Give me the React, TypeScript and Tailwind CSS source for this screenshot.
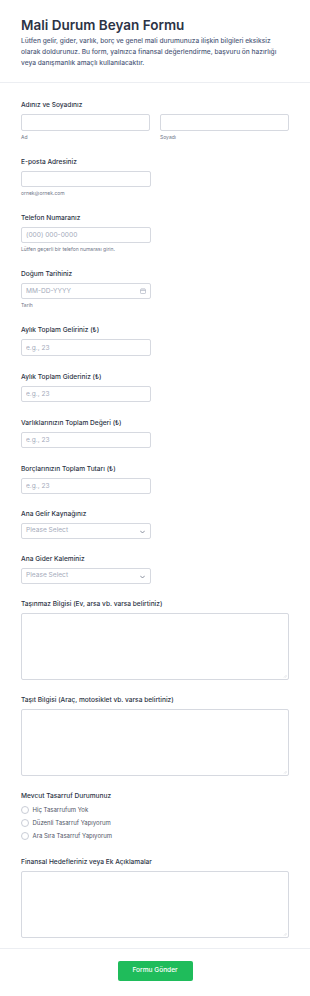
import React from "react";

const labelCls = "block text-[6.6px] leading-[10px] font-medium text-[#2c3345]";
const inputCls =
  "block h-[16px] w-full rounded-[2px] border border-[#d6d9e0] bg-white px-[4px] text-[6.6px] text-[#2c3345] placeholder:text-[#a5abbb] outline-none";
const subCls = "mt-[3px] block text-[5px] leading-[7px] text-[#6f7688]";

function Field({
  label,
  children,
  sub,
  mb = "mb-[16px]",
}: {
  label: string;
  children: React.ReactNode;
  sub?: string;
  mb?: string;
}) {
  return (
    <div className={mb}>
      <label className={labelCls}>{label}</label>
      <div className="mt-[4px]">{children}</div>
      {sub && <span className={subCls}>{sub}</span>}
    </div>
  );
}

function Chevron() {
  return (
    <svg width="5" height="4" viewBox="0 0 10 6" className="absolute right-[5px] top-[6px]">
      <path d="M1 1l4 4 4-4" fill="none" stroke="#6f7688" strokeWidth="1.6" strokeLinecap="round" strokeLinejoin="round" />
    </svg>
  );
}

function TextArea({ h = "h-[67px]" }: { h?: string }) {
  return (
    <div className="relative mt-[4px]">
      <textarea className={"block w-full resize-none rounded-[2px] border border-[#d6d9e0] outline-none " + h} />
      <svg width="4" height="4" viewBox="0 0 8 8" className="absolute bottom-[2px] right-[2px]">
        <path d="M7 2L2 7M7 5L5 7" stroke="#c4c8d0" strokeWidth="1" />
      </svg>
    </div>
  );
}

export default function App() {
  return (
    <div
      className="min-h-[996px] w-[310px] bg-white"
      style={{ fontFamily: "Inter, 'Noto Sans', sans-serif" }}
    >
      <div className="border-b border-[#eceef2] px-[21px] pb-[14px] pt-[16px]">
        <h1 className="text-[13.5px] font-semibold leading-[18px] text-[#2c3345]">
          Mali Durum Beyan Formu
        </h1>
        <p className="mt-[2px] text-[6.6px] leading-[10.8px] font-medium text-[#4f5b7a]">
          Lütfen gelir, gider, varlık, borç ve genel mali durumunuza ilişkin bilgileri eksiksiz
          olarak doldurunuz. Bu form, yalnızca finansal değerlendirme, başvuru ön hazırlığı
          veya danışmanlık amaçlı kullanılacaktır.
        </p>
      </div>

      <div className="border-b border-[#eceef2] px-[21px] pb-[10px] pt-[17px]">
        <div className="mb-[16px]">
          <label className={labelCls}>Adınız ve Soyadınız</label>
          <div className="mt-[4px] grid grid-cols-2 gap-[10px]">
            <div>
              <input className={inputCls + " h-[17px]"} />
              <span className={subCls}>Ad</span>
            </div>
            <div>
              <input className={inputCls + " h-[17px]"} />
              <span className={subCls}>Soyadı</span>
            </div>
          </div>
        </div>

        <div className="w-[130px]">
          <Field label="E-posta Adresiniz" sub="ornek@ornek.com">
            <input className={inputCls} />
          </Field>
          <Field label="Telefon Numaranız" sub="Lütfen geçerli bir telefon numarası girin.">
            <input className={inputCls + " w-[130px]"} placeholder="(000) 000-0000" />
          </Field>
          <Field label="Doğum Tarihiniz" sub="Tarih">
            <div className="relative">
              <input className={inputCls} placeholder="MM-DD-YYYY" />
              <svg width="6" height="6" viewBox="0 0 12 12" className="absolute right-[5px] top-[5px]">
                <rect x="1" y="2" width="10" height="9" rx="1.5" fill="none" stroke="#a5abbb" strokeWidth="1.2" />
                <path d="M1 5h10" stroke="#a5abbb" strokeWidth="1.2" />
                <path d="M4 1v2M8 1v2" stroke="#a5abbb" strokeWidth="1.2" />
              </svg>
            </div>
          </Field>
          <Field label="Aylık Toplam Geliriniz (₺)">
            <input className={inputCls + " h-[17px]"} placeholder="e.g., 23" />
          </Field>
          <Field label="Aylık Toplam Gideriniz (₺)">
            <input className={inputCls} placeholder="e.g., 23" />
          </Field>
          <Field label="Varlıklarınızın Toplam Değeri (₺)">
            <input className={inputCls} placeholder="e.g., 23" />
          </Field>
          <Field label="Borçlarınızın Toplam Tutarı (₺)" mb="mb-[15px]">
            <input className={inputCls} placeholder="e.g., 23" />
          </Field>
          <Field label="Ana Gelir Kaynağınız" mb="mb-[15px]">
            <div className="relative flex h-[16px] items-center rounded-[2px] border border-[#d6d9e0] px-[4px] text-[6.6px] text-[#a5abbb]">
              Please Select
              <Chevron />
            </div>
          </Field>
          <div className="mb-[15px]">
            <label className={labelCls}>Ana Gider Kaleminiz</label>
            <div className="relative mt-[4px] flex h-[16px] items-center rounded-[2px] border border-[#d6d9e0] px-[4px] text-[6.6px] text-[#a5abbb]">
              Please Select
              <Chevron />
            </div>
          </div>
        </div>

        <div className="mb-[15px]">
          <label className={labelCls}>Taşınmaz Bilgisi (Ev, arsa vb. varsa belirtiniz)</label>
          <TextArea />
        </div>
        <div className="mb-[15px]">
          <label className={labelCls}>Taşıt Bilgisi (Araç, motosiklet vb. varsa belirtiniz)</label>
          <TextArea />
        </div>

        <div className="mb-[15px]">
          <label className={labelCls}>Mevcut Tasarruf Durumunuz</label>
          <div className="mt-[2px] flex flex-col">
            {["Hiç Tasarrufum Yok", "Düzenli Tasarruf Yapıyorum", "Ara Sıra Tasarruf Yapıyorum"].map((o) => (
              <div key={o} className="flex h-[13px] items-center gap-[3.5px]">
                <span className="block h-[8px] w-[8px] rounded-full border border-[#c9cdd6] bg-white" />
                <span className="text-[6px] text-[#4f5566]">{o}</span>
              </div>
            ))}
          </div>
        </div>

        <div>
          <label className={labelCls}>Finansal Hedefleriniz veya Ek Açıklamalar</label>
          <TextArea h="h-[67px]" />
        </div>
      </div>

      <div className="flex justify-center pt-[12px]">
        <button className="h-[20px] w-[75px] rounded-[2px] bg-[#1fbc5b] text-[6.6px] font-medium text-white">
          Formu Gönder
        </button>
      </div>
    </div>
  );
}
